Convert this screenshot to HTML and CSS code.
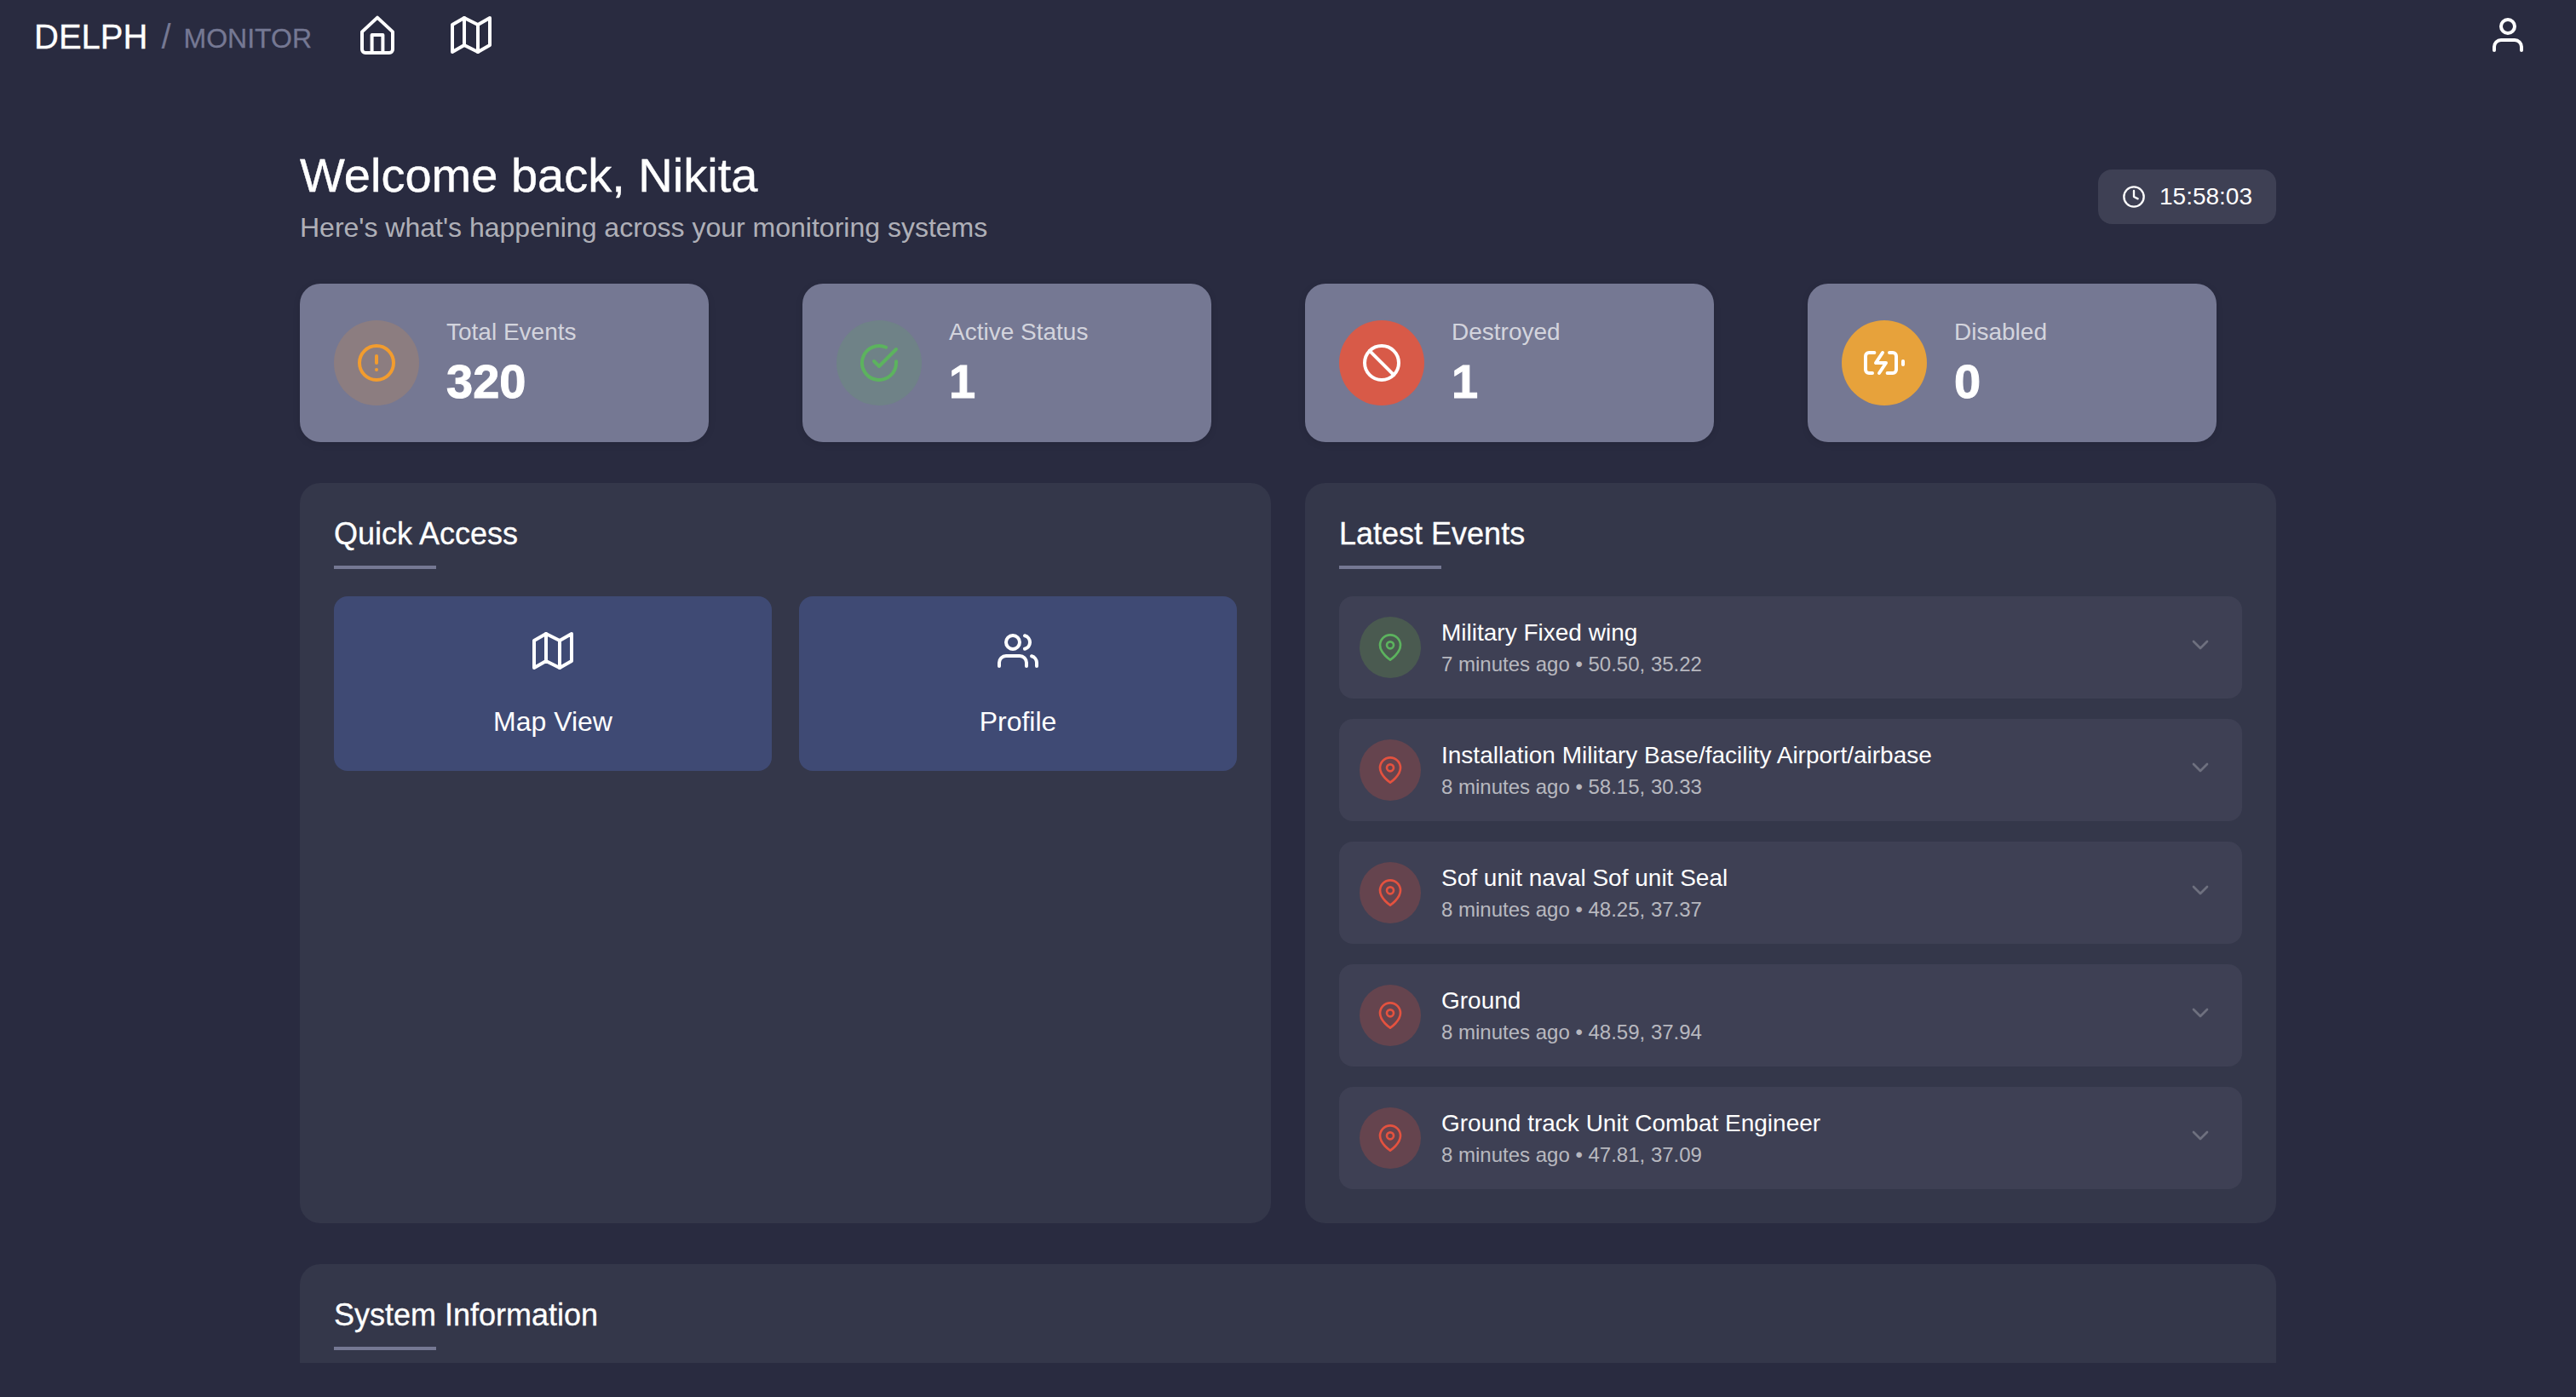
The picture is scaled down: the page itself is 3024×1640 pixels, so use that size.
FILE: index.html
```html
<!DOCTYPE html>
<html lang="en">
<head>
<meta charset="utf-8">
<title>Delph Monitor</title>
<link rel="stylesheet" href="styles.css">
</head>
<body>
<svg class="defs" width="0" height="0" aria-hidden="true">
  <defs>
    <symbol id="i-map" viewBox="0 0 24 24"><polygon points="1 6 1 22 8 18 16 22 23 18 23 2 16 6 8 2 1 6"/><line x1="8" y1="2" x2="8" y2="18"/><line x1="16" y1="6" x2="16" y2="22"/></symbol>
    <symbol id="i-home" viewBox="0 0 24 24"><path d="M12 1.8 3 10.2V20.5a2 2 0 0 0 2 2h14a2 2 0 0 0 2-2V10.2Z"/><path d="M8.8 22.5V12h6.4v10.5"/></symbol>
    <symbol id="i-user" viewBox="0 0 24 24"><path d="M20 21v-2a4 4 0 0 0-4-4H8a4 4 0 0 0-4 4v2"/><circle cx="12" cy="7" r="4"/></symbol>
    <symbol id="i-users" viewBox="0 0 24 24"><path d="M17 21v-2a4 4 0 0 0-4-4H5a4 4 0 0 0-4 4v2"/><circle cx="9" cy="7" r="4"/><path d="M23 21v-2a4 4 0 0 0-3-3.87"/><path d="M16 3.13a4 4 0 0 1 0 7.75"/></symbol>
    <symbol id="i-clock" viewBox="0 0 24 24"><circle cx="12" cy="12" r="10"/><polyline points="12 6 12 12 16 14"/></symbol>
    <symbol id="i-alert" viewBox="0 0 24 24"><circle cx="12" cy="12" r="10"/><line x1="12" y1="8" x2="12" y2="12"/><line x1="12" y1="16" x2="12.01" y2="16"/></symbol>
    <symbol id="i-check" viewBox="0 0 24 24"><path d="M22 11.08V12a10 10 0 1 1-5.93-9.14"/><polyline points="22 4 12 14.01 9 11.01"/></symbol>
    <symbol id="i-slash" viewBox="0 0 24 24"><circle cx="12" cy="12" r="10"/><line x1="4.93" y1="4.93" x2="19.07" y2="19.07"/></symbol>
    <symbol id="i-battery" viewBox="0 0 24 24"><path d="M5 18H3a2 2 0 0 1-2-2V8a2 2 0 0 1 2-2h3.19"/><path d="M15 6h2a2 2 0 0 1 2 2v8a2 2 0 0 1-2 2h-3.19"/><line x1="23" y1="13" x2="23" y2="11"/><polyline points="11 6 7 12 13 12 9 18"/></symbol>
    <symbol id="i-pin" viewBox="0 0 24 24"><path d="M21 10c0 7-9 13-9 13s-9-6-9-13a9 9 0 0 1 18 0z"/><circle cx="12" cy="10" r="3"/></symbol>
    <symbol id="i-chevron" viewBox="0 0 24 24"><polyline points="6 9 12 15 18 9"/></symbol>
  </defs>
</svg>

<header class="topbar">
  <div class="topbar-left">
    <div class="logo">
      <span class="logo-main">DELPH</span>
      <span class="logo-slash">/</span>
      <span class="logo-sub">MONITOR</span>
    </div>
    <nav class="topnav">
      <svg class="icon icon-48"><use href="#i-home"/></svg>
      <svg class="icon icon-48"><use href="#i-map"/></svg>
    </nav>
  </div>
  <svg class="icon icon-48"><use href="#i-user"/></svg>
</header>

<main class="main">
  <div class="content">
    <section class="hero">
      <div>
        <h1 class="hero-title">Welcome back, Nikita</h1>
        <p class="hero-sub">Here's what's happening across your monitoring systems</p>
      </div>
      <div class="clock">
        <svg class="icon icon-clock"><use href="#i-clock"/></svg>
        <span>15:58:03</span>
      </div>
    </section>

    <section class="stats">
      <div class="stat">
        <div class="stat-icon stat-icon-orange"><svg class="icon icon-48"><use href="#i-alert"/></svg></div>
        <div><div class="stat-label">Total Events</div><div class="stat-value">320</div></div>
      </div>
      <div class="stat">
        <div class="stat-icon stat-icon-green"><svg class="icon icon-48"><use href="#i-check"/></svg></div>
        <div><div class="stat-label">Active Status</div><div class="stat-value">1</div></div>
      </div>
      <div class="stat">
        <div class="stat-icon stat-icon-red"><svg class="icon icon-48"><use href="#i-slash"/></svg></div>
        <div><div class="stat-label">Destroyed</div><div class="stat-value">1</div></div>
      </div>
      <div class="stat">
        <div class="stat-icon stat-icon-amber"><svg class="icon icon-48"><use href="#i-battery"/></svg></div>
        <div><div class="stat-label">Disabled</div><div class="stat-value">0</div></div>
      </div>
    </section>

    <section class="columns">
      <div class="panel">
        <h2 class="panel-title">Quick Access</h2>
        <div class="panel-rule"></div>
        <div class="quick-grid">
          <div class="quick">
            <svg class="icon icon-48"><use href="#i-map"/></svg>
            <span>Map View</span>
          </div>
          <div class="quick">
            <svg class="icon icon-48"><use href="#i-users"/></svg>
            <span>Profile</span>
          </div>
        </div>
      </div>

      <div class="panel">
        <h2 class="panel-title">Latest Events</h2>
        <div class="panel-rule"></div>
        <div class="events">
          <div class="event">
            <div class="event-icon event-icon-green"><svg class="icon icon-pin"><use href="#i-pin"/></svg></div>
            <div class="event-text"><div class="event-title">Military Fixed wing</div><div class="event-sub">7 minutes ago • 50.50, 35.22</div></div>
            <svg class="icon icon-chevron"><use href="#i-chevron"/></svg>
          </div>
          <div class="event">
            <div class="event-icon event-icon-red"><svg class="icon icon-pin"><use href="#i-pin"/></svg></div>
            <div class="event-text"><div class="event-title">Installation Military Base/facility Airport/airbase</div><div class="event-sub">8 minutes ago • 58.15, 30.33</div></div>
            <svg class="icon icon-chevron"><use href="#i-chevron"/></svg>
          </div>
          <div class="event">
            <div class="event-icon event-icon-red"><svg class="icon icon-pin"><use href="#i-pin"/></svg></div>
            <div class="event-text"><div class="event-title">Sof unit naval Sof unit Seal</div><div class="event-sub">8 minutes ago • 48.25, 37.37</div></div>
            <svg class="icon icon-chevron"><use href="#i-chevron"/></svg>
          </div>
          <div class="event">
            <div class="event-icon event-icon-red"><svg class="icon icon-pin"><use href="#i-pin"/></svg></div>
            <div class="event-text"><div class="event-title">Ground</div><div class="event-sub">8 minutes ago • 48.59, 37.94</div></div>
            <svg class="icon icon-chevron"><use href="#i-chevron"/></svg>
          </div>
          <div class="event">
            <div class="event-icon event-icon-red"><svg class="icon icon-pin"><use href="#i-pin"/></svg></div>
            <div class="event-text"><div class="event-title">Ground track Unit Combat Engineer</div><div class="event-sub">8 minutes ago • 47.81, 37.09</div></div>
            <svg class="icon icon-chevron"><use href="#i-chevron"/></svg>
          </div>
        </div>
      </div>
    </section>

    <section class="panel panel-system">
      <h2 class="panel-title">System Information</h2>
      <div class="panel-rule"></div>
    </section>
  </div>
</main>
</body>
</html>
```

FILE: styles.css
```css
* { box-sizing: border-box; }

html, body {
  margin: 0;
  height: 1640px;
  overflow: hidden;
}

body {
  background: #292b40;
  color: #fff;
  font-family: "Liberation Sans", Arial, sans-serif;
}

.defs { display: block; height: 0; }

.icon {
  display: block;
  flex: none;
  fill: none;
  stroke: currentColor;
  stroke-width: 2;
  stroke-linecap: round;
  stroke-linejoin: round;
}
.icon-48 { width: 48px; height: 48px; }
.icon-clock { width: 28px; height: 28px; }
.icon-pin { width: 32px; height: 32px; }
.icon-chevron {
  width: 32px;
  height: 32px;
  color: rgba(255, 255, 255, 0.25);
  margin: 0 9px 6px 0;
}

.topbar {
  height: 82px;
  padding: 0 56px 0 40px;
  display: flex;
  align-items: center;
  justify-content: space-between;
}
.topbar-left { display: flex; align-items: center; }

.logo {
  display: flex;
  align-items: flex-start;
  margin-top: 4px;
}
.logo-main { font-size: 40px; line-height: 48px; -webkit-text-stroke: 0.3px #fff; }
.logo-slash { font-size: 40px; line-height: 48px; color: #757893; margin: 0 15px 0 16px; }
.logo-sub { font-size: 32px; line-height: 40px; margin-top: 6px; color: #757893; -webkit-text-stroke: 0.3px #757893; }

.topnav {
  display: flex;
  gap: 62px;
  margin-left: 53px;
}

.main {
  height: 1518px;
  overflow: hidden;
  padding-top: 92px;
}
.content { width: 2320px; margin: 0 auto; }

.hero {
  display: flex;
  align-items: center;
  justify-content: space-between;
  margin-bottom: 46px;
}
.hero-title {
  margin: 0 0 9px;
  font-size: 56px;
  line-height: 64px;
  font-weight: 400;
  -webkit-text-stroke: 0.4px #fff;
}
.hero-sub {
  margin: 0;
  font-size: 32px;
  line-height: 40px;
  color: rgba(255, 255, 255, 0.65);
}

.clock {
  height: 64px;
  padding: 0 28px;
  display: flex;
  align-items: center;
  gap: 16px;
  background: #3e4054;
  border-radius: 16px;
  font-size: 28px;
}

.stats {
  display: grid;
  grid-template-columns: repeat(4, 480px);
  gap: 110px;
  margin-bottom: 48px;
}
.stat {
  height: 186px;
  padding: 0 40px;
  display: flex;
  align-items: center;
  gap: 32px;
  background: #757893;
  border-radius: 24px;
  box-shadow: 0 2px 8px rgba(0, 0, 0, 0.1);
}
.stat-icon {
  width: 100px;
  height: 100px;
  flex: none;
  border-radius: 50%;
  display: flex;
  align-items: center;
  justify-content: center;
}
.stat-icon-orange { background: #8c7d80; color: #f29c2e; }
.stat-icon-green { background: #6f8287; color: #5cb35e; }
.stat-icon-red { background: #d85a48; color: #fff; }
.stat-icon-amber { background: #e7a23b; color: #fff; }
.stat-label {
  font-size: 28px;
  line-height: 36px;
  color: rgba(255, 255, 255, 0.7);
  margin-bottom: 8px;
}
.stat-value {
  font-size: 56px;
  line-height: 64px;
  font-weight: 700;
  -webkit-text-stroke: 1px #fff;
}

.columns {
  display: grid;
  grid-template-columns: repeat(2, 1140px);
  gap: 40px;
  margin-bottom: 48px;
}

.panel {
  background: #34374a;
  border-radius: 24px;
  padding: 40px;
}
.panel-title {
  margin: 0;
  font-size: 36px;
  line-height: 40px;
  font-weight: 400;
  -webkit-text-stroke: 0.3px #fff;
}
.panel-rule {
  width: 120px;
  height: 4px;
  margin: 17px 0 32px;
  background: #757893;
}
.panel-system { height: 300px; }

.quick-grid {
  display: grid;
  grid-template-columns: 1fr 1fr;
  gap: 32px;
}
.quick {
  padding: 40px 0 38px;
  display: flex;
  flex-direction: column;
  align-items: center;
  gap: 39px;
  background: #3f4a74;
  border-radius: 16px;
  font-size: 32px;
  line-height: 40px;
}

.events { display: flex; flex-direction: column; gap: 24px; }
.event {
  height: 120px;
  padding: 0 24px;
  display: flex;
  align-items: center;
  gap: 24px;
  background: #3e4054;
  border-radius: 16px;
}
.event-icon {
  width: 72px;
  height: 72px;
  flex: none;
  border-radius: 50%;
  display: flex;
  align-items: center;
  justify-content: center;
}
.event-icon-green { background: #4a5a50; color: #5cb35e; }
.event-icon-red { background: #65444e; color: #e4523f; }
.event-text { flex: 1; }
.event-title { font-size: 28px; line-height: 36px; margin-bottom: 3px; }
.event-sub { font-size: 24px; line-height: 32px; color: rgba(255, 255, 255, 0.65); }
```
